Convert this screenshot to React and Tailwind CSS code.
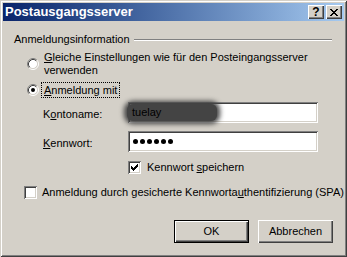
import React from "react";

function Radio({ checked }) {
  return (
    <svg width="12" height="12" viewBox="0 0 12 12" className="shrink-0 block">
      <circle cx="6" cy="6" r="4.5" fill="#fff" />
      <path d="M2.11 9.89 A5.5 5.5 0 0 1 9.89 2.11" stroke="#808080" strokeWidth="1" fill="none" />
      <path d="M9.89 2.11 A5.5 5.5 0 0 1 2.11 9.89" stroke="#ffffff" strokeWidth="1" fill="none" />
      <path d="M2.82 9.18 A4.5 4.5 0 0 1 9.18 2.82" stroke="#404040" strokeWidth="1" fill="none" />
      <path d="M9.18 2.82 A4.5 4.5 0 0 1 2.82 9.18" stroke="#D4D0C8" strokeWidth="1" fill="none" />
      {checked && <circle cx="6" cy="6" r="2" fill="#000" />}
    </svg>
  );
}

function Checkbox({ checked }) {
  return (
    <div className="w-[13px] h-[13px] shrink-0 bg-white shadow-[inset_1px_1px_#808080,inset_-1px_-1px_#ffffff,inset_2px_2px_#404040,inset_-2px_-2px_#D4D0C8] flex items-center justify-center">
      {checked && (
        <svg width="7" height="7" viewBox="0 0 7 7" shapeRendering="crispEdges" className="block">
          <path
            d="M6 0h1v3h-1zM5 1h1v3h-1zM4 2h1v3h-1zM3 3h1v3h-1zM2 4h1v3h-1zM1 3h1v3h-1zM0 2h1v3h-1z"
            fill="#000"
          />
        </svg>
      )}
    </div>
  );
}

function CaptionButton({ children }) {
  return (
    <div className="w-[16px] h-[14px] bg-[#D4D0C8] shadow-[inset_1px_1px_#ffffff,inset_-1px_-1px_#404040,inset_-2px_-2px_#808080] flex items-center justify-center">
      {children}
    </div>
  );
}

function Button({ children, def }) {
  if (def) {
    return (
      <div className="w-[75px] h-[23px] border border-black">
        <div className="w-full h-full bg-[#D4D0C8] shadow-[inset_1px_1px_#ffffff,inset_-1px_-1px_#404040,inset_-2px_-2px_#808080] flex items-center justify-center">
          {children}
        </div>
      </div>
    );
  }
  return (
    <div className="w-[75px] h-[23px] bg-[#D4D0C8] shadow-[inset_1px_1px_#ffffff,inset_-1px_-1px_#404040,inset_-2px_-2px_#808080] flex items-center justify-center">
      {children}
    </div>
  );
}

function Field({ children }) {
  return (
    <div className="relative w-[190px] h-[21px] bg-white shadow-[inset_1px_1px_#808080,inset_-1px_-1px_#ffffff,inset_2px_2px_#404040,inset_-2px_-2px_#D4D0C8] flex items-center pl-[4px]">
      {children}
    </div>
  );
}

export default function App() {
  return (
    <div className="w-[347px] h-[257px] bg-[#D4D0C8] p-[3px] flex flex-col font-['Liberation_Sans',Arial,sans-serif] text-[11px] leading-[13px] text-black shadow-[inset_1px_1px_#D4D0C8,inset_-1px_-1px_#404040,inset_2px_2px_#ffffff,inset_-2px_-2px_#808080] overflow-hidden">
      {/* Title bar */}
      <div className="h-[18px] bg-gradient-to-r from-[#0A246A] to-[#A6CAF0] flex items-center justify-between pl-[2px] pr-[2px]">
        <span className="text-white font-bold text-[13px] leading-[14px] font-['Liberation_Sans',Arial,sans-serif]">
          Postausgangsserver
        </span>
        <div className="flex items-center gap-[2px]">
          <CaptionButton>
            <span className="font-bold text-[12px] leading-[12px] text-black">?</span>
          </CaptionButton>
          <CaptionButton>
            <svg width="8" height="7" viewBox="0 0 8 7" shapeRendering="crispEdges" className="block">
              <path
                d="M0 0h2v1h-2zM6 0h2v1h-2zM1 1h2v1h-2zM5 1h2v1h-2zM2 2h4v1h-4zM3 3h2v1h-2zM2 4h4v1h-4zM1 5h2v1h-2zM5 5h2v1h-2zM0 6h2v1h-2zM6 6h2v1h-2z"
                fill="#000"
              />
            </svg>
          </CaptionButton>
        </div>
      </div>

      {/* Group heading */}
      <div className="mt-[12px] flex items-center pl-[11px] pr-[12px]">
        <span className="w-[120px] shrink-0">Anmeldungsinformation</span>
        <div className="flex-1 h-[2px] border-t border-[#808080] border-b border-b-white" />
      </div>

      {/* Radio 1 */}
      <div className="mt-[5px] pl-[24px] flex items-center h-[26px]">
        <Radio />
        <span className="ml-[5px]">
          <u>G</u>leiche Einstellungen wie für den Posteingangsserver
          <br />
          verwenden
        </span>
      </div>

      {/* Radio 2 */}
      <div className="mt-[5px] pl-[24px] flex items-center">
        <Radio checked />
        <span className="ml-[2px] border border-dotted border-black px-[2px] leading-[14px]">
          <u>A</u>nmeldung mit
        </span>
      </div>

      {/* Kontoname */}
      <div className="mt-[4px] pl-[40px] flex items-start">
        <span className="w-[85px] pt-[6px]">
          K<u>o</u>ntoname:
        </span>
        <Field>
          <div className="absolute left-[-1px] top-[2px] w-[90px] h-[17px] rounded-[6px] bg-[#444444] shadow-[0_0_5px_3px_#444444]" />
          <span className="relative text-black">tuelay</span>
        </Field>
      </div>

      {/* Kennwort */}
      <div className="mt-[8px] pl-[40px] flex items-start">
        <span className="w-[85px] pt-[6px]">
          <u>K</u>ennwort:
        </span>
        <Field>
          <div className="flex gap-[2px] pl-[1px]">
            {[0, 1, 2, 3, 4, 5].map((i) => (
              <div key={i} className="w-[5px] h-[5px] rounded-full bg-black" />
            ))}
          </div>
        </Field>
      </div>

      {/* Kennwort speichern */}
      <div className="mt-[9px] pl-[125px] flex items-center">
        <Checkbox checked />
        <span className="ml-[6px]">
          Kennwort <u>s</u>peichern
        </span>
      </div>

      {/* SPA */}
      <div className="mt-[12px] pl-[21px] flex items-center">
        <Checkbox />
        <span className="ml-[5px]">
          Anmeldung durch gesicherte Kennworta<u>u</u>thentifizierung (SPA)
        </span>
      </div>

      {/* Buttons */}
      <div className="mt-[21px] flex justify-end pr-[11px] gap-[9px]">
        <Button def>OK</Button>
        <Button>Abbrechen</Button>
      </div>
    </div>
  );
}
